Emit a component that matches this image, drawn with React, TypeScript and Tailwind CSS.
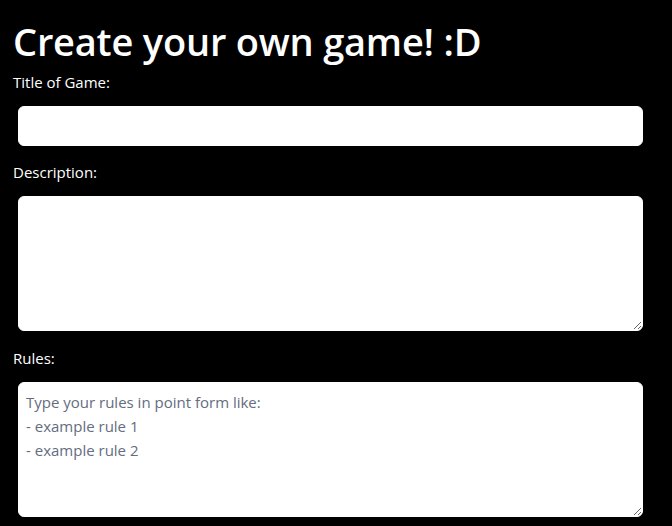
export default function App() {
  return (
    <div className="min-h-[526px] bg-black text-white font-['Open_Sans','Noto_Sans',sans-serif]">
      <div className="px-[13px] pt-[19px]">
        <h1 className="text-[38px] font-semibold leading-[1.2] tracking-[-0.2px]">Create your own game! :D</h1>
        <form className="flex flex-col">
          <label className="mt-[5px] text-[15px] leading-6">Title of Game:</label>
          <input
            type="text"
            className="mt-[12px] ml-[5px] h-[40px] w-[625px] rounded-[6px] border border-white bg-white px-[8px] text-black outline-none"
          />
          <label className="mt-[14px] text-[15px] leading-6">Description:</label>
          <textarea className="mt-[12px] ml-[5px] h-[135px] w-[625px] rounded-[6px] border border-white bg-white px-[8px] py-[6px] text-black outline-none" />
          <label className="mt-[15px] text-[15px] leading-6">Rules:</label>
          <textarea
            placeholder={'Type your rules in point form like:\n- example rule 1\n- example rule 2'}
            className="mt-[12px] ml-[5px] h-[135px] w-[625px] rounded-[6px] border border-white bg-white px-[7px] pt-[7px] pb-[5px] text-[15px] leading-6 text-black outline-none placeholder:text-[#646c80]"
          />
        </form>
      </div>
    </div>
  );
}
